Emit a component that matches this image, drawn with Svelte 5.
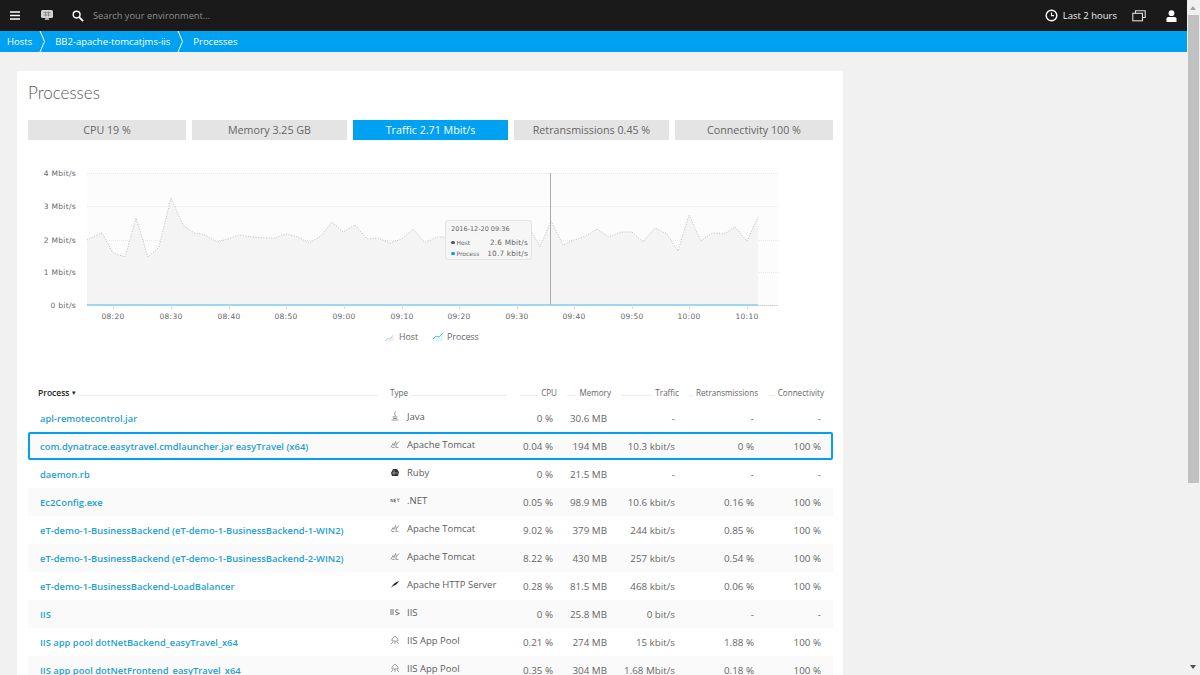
<script>
  const tabs = [
    { label: 'CPU 19 %' },
    { label: 'Memory 3.25 GB' },
    { label: 'Traffic 2.71 Mbit/s', active: true },
    { label: 'Retransmissions 0.45 %' },
    { label: 'Connectivity 100 %' }
  ];

  const columns = ['CPU', 'Memory', 'Traffic', 'Retransmissions', 'Connectivity'];

  const rows = [
    { name: 'apl-remotecontrol.jar', type: 'Java', icon: 'java', v: ['0 %', '30.6 MB', '-', '-', '-'] },
    { name: 'com.dynatrace.easytravel.cmdlauncher.jar easyTravel (x64)', type: 'Apache Tomcat', icon: 'tomcat', v: ['0.04 %', '194 MB', '10.3 kbit/s', '0 %', '100 %'], selected: true },
    { name: 'daemon.rb', type: 'Ruby', icon: 'ruby', v: ['0 %', '21.5 MB', '-', '-', '-'] },
    { name: 'Ec2Config.exe', type: '.NET', icon: 'net', v: ['0.05 %', '98.9 MB', '10.6 kbit/s', '0.16 %', '100 %'] },
    { name: 'eT-demo-1-BusinessBackend (eT-demo-1-BusinessBackend-1-WIN2)', type: 'Apache Tomcat', icon: 'tomcat', v: ['9.02 %', '379 MB', '244 kbit/s', '0.85 %', '100 %'] },
    { name: 'eT-demo-1-BusinessBackend (eT-demo-1-BusinessBackend-2-WIN2)', type: 'Apache Tomcat', icon: 'tomcat', v: ['8.22 %', '430 MB', '257 kbit/s', '0.54 %', '100 %'] },
    { name: 'eT-demo-1-BusinessBackend-LoadBalancer', type: 'Apache HTTP Server', icon: 'feather', v: ['0.28 %', '81.5 MB', '468 kbit/s', '0.06 %', '100 %'] },
    { name: 'IIS', type: 'IIS', icon: 'iis', v: ['0 %', '25.8 MB', '0 bit/s', '-', '-'] },
    { name: 'IIS app pool dotNetBackend_easyTravel_x64', type: 'IIS App Pool', icon: 'pool', v: ['0.21 %', '274 MB', '15 kbit/s', '1.88 %', '100 %'] },
    { name: 'IIS app pool dotNetFrontend_easyTravel_x64', type: 'IIS App Pool', icon: 'pool', v: ['0.35 %', '304 MB', '1.68 Mbit/s', '0.18 %', '100 %'] }
  ];

  const yTicks = [
    { label: '4 Mbit/s', y: 173 },
    { label: '3 Mbit/s', y: 206 },
    { label: '2 Mbit/s', y: 240 },
    { label: '1 Mbit/s', y: 272 },
    { label: '0 bit/s', y: 305 }
  ];

  const xTicks = [
    ['08:20', 113], ['08:30', 171], ['08:40', 229], ['08:50', 286], ['09:00', 344], ['09:10', 402],
    ['09:20', 459], ['09:30', 517], ['09:40', 574], ['09:50', 632], ['10:00', 689], ['10:10', 747]
  ];

  const host = [
    [87, 240], [102, 233], [113, 253], [125, 257], [136, 218], [148, 257], [159, 247], [171, 198],
    [183, 225], [194, 233], [205, 235], [217, 242], [228, 239], [239, 235], [252, 237], [263, 238],
    [275, 238], [286, 234], [298, 237], [309, 243], [321, 236], [332, 222], [343, 232], [355, 225],
    [367, 239], [378, 238], [390, 243], [402, 239], [413, 229], [425, 243], [437, 237], [448, 237],
    [460, 237], [471, 232], [483, 234], [494, 238], [506, 234], [517, 228], [528, 225], [540, 247],
    [551, 221], [563, 245], [574, 240], [586, 236], [597, 229], [609, 237], [621, 232], [632, 232],
    [643, 242], [655, 228], [667, 234], [678, 251], [689, 215], [701, 241], [712, 233], [724, 234],
    [735, 227], [747, 241], [758, 217]
  ];

  const hostLine = host.map((p) => p.join(',')).join(' ');
  const hostArea = `87,305 ${hostLine} 758,305`;
</script>

<div class="page">
  <div class="main">
    <header class="topbar">
      <svg class="ico-menu" width="10" height="9" viewBox="0 0 10 9"><path d="M0 1h10M0 4.5h10M0 8h10" stroke="#fff" stroke-width="1.5" /></svg>
      <svg class="ico-screen" width="12" height="11" viewBox="0 0 12 11"><rect x="0" y="0" width="12" height="8" rx="1.5" fill="#d4d4d4" /><path d="M2.5 2.5h7M2.5 5h7M4.5 1.5v5M7.5 1.5v5" stroke="#777" stroke-width="0.7" /><path d="M3.5 10h5l-1-2h-3z" fill="#aaa" /></svg>
      <svg class="ico-search" width="12" height="12" viewBox="0 0 13 13"><circle cx="5" cy="5" r="3.7" fill="none" stroke="#fff" stroke-width="1.5" /><path d="M7.8 7.8l4.2 4.2" stroke="#fff" stroke-width="2" /></svg>
      <span class="search">Search your environment...</span>
      <div class="top-right">
        <svg class="ico-clock" width="13" height="13" viewBox="0 0 13 13"><circle cx="6.5" cy="6.5" r="5.3" fill="none" stroke="#fff" stroke-width="1.4" /><path d="M6.5 3.4v3.3h2.6" fill="none" stroke="#fff" stroke-width="1.2" /></svg>
        <span class="range">Last 2 hours</span>
        <svg class="ico-windows" width="14" height="12" viewBox="0 0 14 12"><path d="M3.5 3V.8h9.7v6.7h-2.4" fill="none" stroke="#ddd" stroke-width="1.1" /><rect x="0.8" y="3.3" width="9.7" height="7.5" fill="none" stroke="#ddd" stroke-width="1.1" /></svg>
        <svg class="ico-user" width="11" height="12" viewBox="0 0 11 12"><circle cx="5.5" cy="3.2" r="2.9" fill="#fff" /><path d="M.5 12V8.6Q.5 7 2.5 7h6q2 0 2 1.6V12z" fill="#fff" /></svg>
      </div>
    </header>

    <nav class="crumbs">
      <span class="crumb">Hosts</span>
      <svg class="chev" width="7" height="21" viewBox="0 0 7 21"><path d="M1 0l4.5 10.5L1 21" fill="none" stroke="#fff" stroke-width="1" /></svg>
      <span class="crumb">BB2-apache-tomcatjms-iis</span>
      <svg class="chev" width="7" height="21" viewBox="0 0 7 21"><path d="M1 0l4.5 10.5L1 21" fill="none" stroke="#fff" stroke-width="1" /></svg>
      <span class="crumb">Processes</span>
    </nav>

    <main class="content">
      <section class="card">
        <h1>Processes</h1>

        <div class="tabs">
          {#each tabs as tab}
            <div class="tab" class:active={tab.active}>{tab.label}</div>
          {/each}
        </div>

        <div class="chart">
          <svg width="805" height="190" viewBox="28 160 805 190">
            <rect x="87" y="173" width="691" height="132" fill="#fcfcfc" />
            {#each yTicks as t}
              <line x1="87" x2="778" y1={t.y + 0.5} y2={t.y + 0.5} stroke="#e8e8e8" stroke-width="1" stroke-dasharray="1 1" />
              <text class="axis" x="76" y={t.y + 3} text-anchor="end">{t.label}</text>
            {/each}
            <polygon points={hostArea} fill="#f4f4f4" />
            <polyline points={hostLine} fill="none" stroke="#bdbdbd" stroke-width="1" stroke-dasharray="1 1.6" />
            <line x1="87" x2="758" y1="305" y2="305" stroke="#7fd0ee" stroke-width="1.4" />
            <line x1="758" x2="778" y1="305.5" y2="305.5" stroke="#ccc" stroke-width="1" stroke-dasharray="1 1" />
            {#each xTicks as t}
              <line x1={t[1] + 0.5} x2={t[1] + 0.5} y1="305" y2="309" stroke="#ddd" />
              <text class="axis" x={t[1]} y="319" text-anchor="middle">{t[0]}</text>
            {/each}
            <line x1="550.5" x2="550.5" y1="173" y2="305" stroke="#adadad" stroke-width="1" />

            <path d="M385 341l3-3 2 1 3-4v1l1 5z" fill="#f0f0f0" />
            <path d="M385 341l3-3 2 1 3-4" fill="none" stroke="#aaa" stroke-width="0.8" stroke-dasharray="1 0.6" />
            <text class="legend" x="399" y="340">Host</text>
            <path d="M433 341v-2l3-3 3 1 4-4v8z" fill="#e3f4fb" />
            <path d="M433 339l3-3 3 1 4-4" fill="none" stroke="#5cc0e8" stroke-width="1" />
            <text class="legend" x="447" y="340">Process</text>
          </svg>

          <div class="tooltip">
            <div class="tip-date">2016-12-20 09:36</div>
            <div class="tip-row"><i class="dot host"></i><span class="tip-name">Host</span><span class="tip-val">2.6 Mbit/s</span></div>
            <div class="tip-row"><i class="dot proc"></i><span class="tip-name">Process</span><span class="tip-val">10.7 kbit/s</span></div>
          </div>
        </div>

        <div class="table">
          <div class="row head">
            <div class="th first"><b>Process</b><span class="sort">▾</span><i class="rule"></i></div>
            <div class="th type-h">Type<i class="rule"></i></div>
            {#each columns as c}
              <div class="th num"><i class="rule"></i>{c}</div>
            {/each}
          </div>

          {#each rows as r}
            <div class="row item" class:selected={r.selected}>
              <a class="name" href="#top">{r.name}</a>
              <div class="type">
                <svg class="type-ico" width="10" height="10" viewBox="0 0 10 10">
                  {#if r.icon === 'java'}
                    <path d="M5.5 0.5Q4 2 5 3.5T4.5 5.5M2.5 6h5M3 7.5h4M1.5 9h7" stroke="#8a8a8a" stroke-width="0.9" fill="none" />
                  {:else if r.icon === 'tomcat'}
                    <path d="M1 8.5l2-4 1 2 1.5-4 1 3 2.5-3M2 8.5h2.5M5.5 8.5h3M6 5v3" stroke="#8a8a8a" stroke-width="0.8" fill="none" />
                  {:else if r.icon === 'ruby'}
                    <path d="M1 6l2-4h4l2 3-1 4H2z" fill="#333" />
                    <path d="M4 3v5M2 6h6" stroke="#ddd" stroke-width="0.5" />
                  {:else if r.icon === 'net'}
                    <path d="M1 7V4l2 3V4M4.5 4v3M4.5 4H6M4.5 5.5H6M4.5 7H6M7 4h2.5M8.2 4v3" stroke="#666" stroke-width="0.7" fill="none" />
                  {:else if r.icon === 'feather'}
                    <path d="M1 9Q3 4 9 2Q7 6 3 7z" fill="#222" />
                  {:else if r.icon === 'iis'}
                    <path d="M1 2v6M3 2v6M8.5 3Q5.5 2 5.5 4t3 2-3 2" stroke="#666" stroke-width="0.9" fill="none" />
                  {:else}
                    <path d="M5 1L2 4v2h6V4zM1 9l2-2M9 9L7 7M5 6v3" stroke="#888" stroke-width="0.8" fill="none" />
                  {/if}
                </svg>
                {r.type}
              </div>
              {#each r.v as val}
                <div class="val">{val}</div>
              {/each}
            </div>
          {/each}
        </div>
      </section>
    </main>
  </div>

  <aside class="scrollbar">
    <i class="arrow up"></i>
    <div class="thumb"></div>
    <i class="arrow down"></i>
  </aside>
</div>

<style>
  :global(body) {
    margin: 0;
    background: #f1f1f1;
    font-family: "Open Sans", "Liberation Sans", sans-serif;
    overflow: hidden;
  }

  .page {
    display: flex;
    height: 675px;
    overflow: hidden;
  }

  .main {
    flex: 1;
    min-width: 0;
    display: flex;
    flex-direction: column;
  }

  .topbar {
    flex: none;
    height: 31px;
    background: #1a1a1a;
    display: flex;
    align-items: center;
    color: #fff;
    font-size: 9.5px;
  }

  .ico-menu { margin-left: 10px; }
  .ico-screen { margin-left: 21px; }
  .ico-search { margin-left: 19px; }

  .search {
    margin-left: 9px;
    font-size: 9.3px;
    color: #8f8f8f;
  }

  .top-right {
    margin-left: auto;
    display: flex;
    align-items: center;
  }

  .range {
    margin-left: 5px;
    color: #eee;
  }

  .ico-windows { margin-left: 15px; }
  .ico-user { margin-left: 20px; margin-right: 10px; }

  .crumbs {
    flex: none;
    height: 21px;
    background: #00a1f1;
    display: flex;
    align-items: center;
    color: #fff;
    font-size: 9.5px;
    padding-left: 7px;
  }

  .chev { margin: 0 9px 0 7px; }

  .content {
    flex: 1;
    min-height: 0;
    padding: 19px 0 0 17px;
  }

  .card {
    width: 826px;
    height: 604px;
    box-sizing: border-box;
    background: #fff;
    padding: 0 10px 0 11px;
    overflow: hidden;
  }

  h1 {
    margin: 0;
    padding-top: 10px;
    height: 49px;
    box-sizing: border-box;
    font-family: Lato, "Open Sans", sans-serif;
    font-size: 17px;
    font-weight: 300;
    line-height: 23px;
    color: #5a5a5a;
  }

  .tabs {
    display: grid;
    grid-template-columns: 158px 155px 155px 155px 158px;
    gap: 6px;
  }

  .tab {
    height: 20px;
    line-height: 20px;
    background: #e4e4e4;
    text-align: center;
    font-size: 10.7px;
    color: #666;
  }

  .tab.active {
    background: #00a1f1;
    color: #fff;
  }

  .chart {
    position: relative;
    height: 240px;
    padding-top: 20px;
    box-sizing: border-box;
  }

  .chart svg {
    display: block;
  }

  .axis {
    font-family: "DejaVu Sans", sans-serif;
    font-size: 7.5px;
    fill: #666;
    letter-spacing: 0.3px;
  }

  .legend {
    font-family: "Open Sans", sans-serif;
    font-size: 8.8px;
    fill: #666;
  }

  .tooltip {
    position: absolute;
    left: 417px;
    top: 80px;
    width: 87px;
    height: 40px;
    box-sizing: border-box;
    padding: 4px 3px 4px 5px;
    background: rgba(245, 245, 245, 0.92);
    border: 1px solid #e3e3e3;
    border-radius: 3px;
    font-family: "DejaVu Sans", sans-serif;
    font-size: 6.5px;
    color: #666;
  }

  .tip-date {
    height: 12px;
    line-height: 9px;
  }

  .tip-row {
    display: flex;
    align-items: center;
    height: 11px;
  }

  .tip-name {
    font-size: 6px;
  }

  .dot {
    width: 3.5px;
    height: 3.5px;
    border-radius: 50%;
    margin-right: 2px;
  }

  .dot.host { background: #555; }
  .dot.proc { background: #00a1f1; }

  .tip-val {
    margin-left: auto;
    font-size: 7.3px;
    letter-spacing: 0.2px;
  }

  .row {
    display: grid;
    grid-template-columns: 362px 120px 47px 54px 68px 79px 66px 9px;
    align-items: center;
  }

  .head {
    height: 24px;
    font-size: 8.1px;
    color: #666;
  }

  .th {
    display: flex;
    align-items: center;
    white-space: nowrap;
  }

  .first { padding-left: 10px; color: #222; font-size: 8.5px; }
  .first b { font-weight: 600; }
  .sort { margin-left: 3px; font-size: 7px; }

  .type-h .rule { margin-left: 3px; }

  .num { justify-content: flex-end; }

  .rule {
    flex: 1;
    height: 1px;
    background: #eee;
    margin: 6px 3px 0 10px;
  }

  .first .rule { margin: 6px 12px 0 2px; }

  .item {
    height: 28px;
    box-sizing: border-box;
    font-size: 9.8px;
    color: #666;
  }

  .item:nth-child(odd) {
    background: #fafafa;
  }

  .item.selected {
    outline: 2px solid #00a1f1;
    outline-offset: -2px;
    border-radius: 2px;
  }

  .name {
    padding-left: 12px;
    color: #1f9fcf;
    font-size: 9.4px;
    font-weight: 600;
    text-decoration: none;
    white-space: nowrap;
  }

  .type {
    display: flex;
    align-items: center;
    gap: 7px;
    padding-bottom: 4px;
    font-size: 9.5px;
    color: #5c5c5c;
    white-space: nowrap;
  }

  .val {
    text-align: right;
    padding-right: 4px;
    white-space: nowrap;
  }

  .val:last-child {
    padding-right: 3px;
  }

  .scrollbar {
    flex: none;
    width: 13px;
    background: #f1f1f1;
    position: relative;
  }

  .thumb {
    position: absolute;
    left: 1px;
    right: 1px;
    top: 15px;
    height: 468px;
    background: #c1c1c1;
  }

  .arrow {
    position: absolute;
    left: 3px;
    border-left: 3.5px solid transparent;
    border-right: 3.5px solid transparent;
  }

  .arrow.up {
    top: 6px;
    border-bottom: 4px solid #a3a3a3;
  }

  .arrow.down {
    bottom: 6px;
    border-top: 4px solid #505050;
  }
</style>
